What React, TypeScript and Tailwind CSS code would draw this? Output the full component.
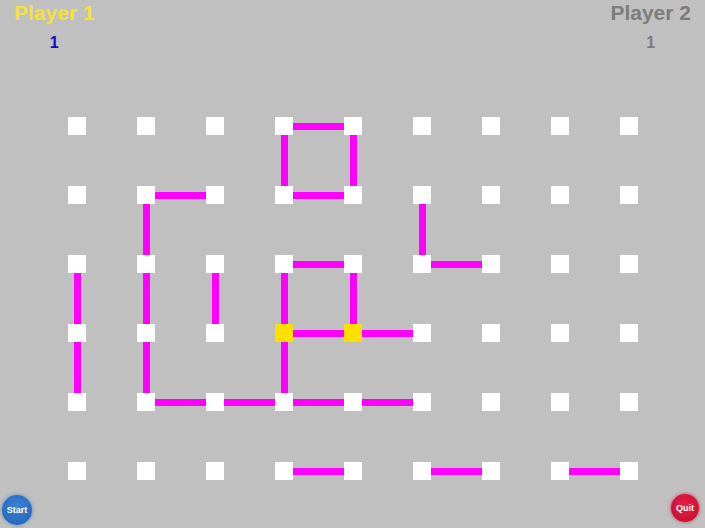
import React from "react";

const H = new Set(["0-3", "1-1", "1-3", "2-3", "2-5", "3-3", "3-4", "4-1", "4-2", "4-3", "4-4", "5-3", "5-5", "5-7"]);
const V = new Set(["0-3", "0-4", "1-1", "2-1", "3-1", "1-5", "2-0", "3-0", "2-2", "2-3", "3-3", "2-4"]);
const Y = new Set(["3-3", "3-4"]);

function Board() {
  const cells: React.ReactNode[] = [];
  for (let i = 0; i < 11; i++) {
    for (let j = 0; j < 17; j++) {
      const key = `${i}-${j}`;
      const r = Math.floor(i / 2);
      const c = Math.floor(j / 2);
      if (i % 2 === 0 && j % 2 === 0) {
        const yellow = Y.has(`${r}-${c}`);
        cells.push(
          <div key={key} className={yellow ? "bg-[#fde000]" : "bg-white"} />
        );
      } else if (i % 2 === 0) {
        cells.push(
          <div key={key} className="flex items-center">
            {H.has(`${r}-${c}`) && <div className="h-[7px] w-full bg-[#ff00ff]" />}
          </div>
        );
      } else if (j % 2 === 0) {
        cells.push(
          <div key={key} className="flex justify-center">
            {V.has(`${r}-${c}`) && <div className="w-[7px] h-full bg-[#ff00ff]" />}
          </div>
        );
      } else {
        cells.push(<div key={key} />);
      }
    }
  }
  return (
    <div className="grid grid-cols-[repeat(8,18px_51px)_18px] grid-rows-[repeat(5,18px_51px)_18px] ml-[68px] mt-[65px] w-fit">
      {cells}
    </div>
  );
}

export default function App() {
  return (
    <div
      className="w-[705px] h-[528px] bg-[#c0c0c0] flex flex-col overflow-hidden"
      style={{ fontFamily: '"Liberation Sans", Arial, sans-serif' }}
    >
      <div className="flex justify-between px-[14px] pt-[1px]">
        <div className="flex flex-col items-center">
          <div className="text-[21px] leading-[24px] font-bold text-[#f4e23c]">Player 1</div>
          <div className="mt-[9px] text-[16px] leading-[18px] font-bold text-[#0c0cc8]">1</div>
        </div>
        <div className="flex flex-col items-center">
          <div className="text-[21px] leading-[24px] font-bold text-[#7c7c7c]">Player 2</div>
          <div className="mt-[9px] text-[16px] leading-[18px] font-bold text-[#7c7c7c]">1</div>
        </div>
      </div>
      <Board />
      <div className="mt-auto flex justify-between items-end pl-[2px] pr-[6px] pb-[3px]">
        <div className="w-[30px] h-[30px] rounded-full bg-[radial-gradient(circle_at_50%_40%,#3d85d6,#1f5fb4)] shadow-[0_0_3px_1px_rgba(60,120,200,0.5)] flex items-center justify-center text-white text-[9px] font-bold leading-none">
          Start
        </div>
        <div className="w-[28px] h-[28px] mb-[3px] rounded-full bg-[radial-gradient(circle_at_50%_40%,#e52145,#c20c2e)] shadow-[0_0_3px_1px_rgba(210,30,60,0.5)] flex items-center justify-center text-white text-[9px] font-bold leading-none">
          Quit
        </div>
      </div>
    </div>
  );
}
